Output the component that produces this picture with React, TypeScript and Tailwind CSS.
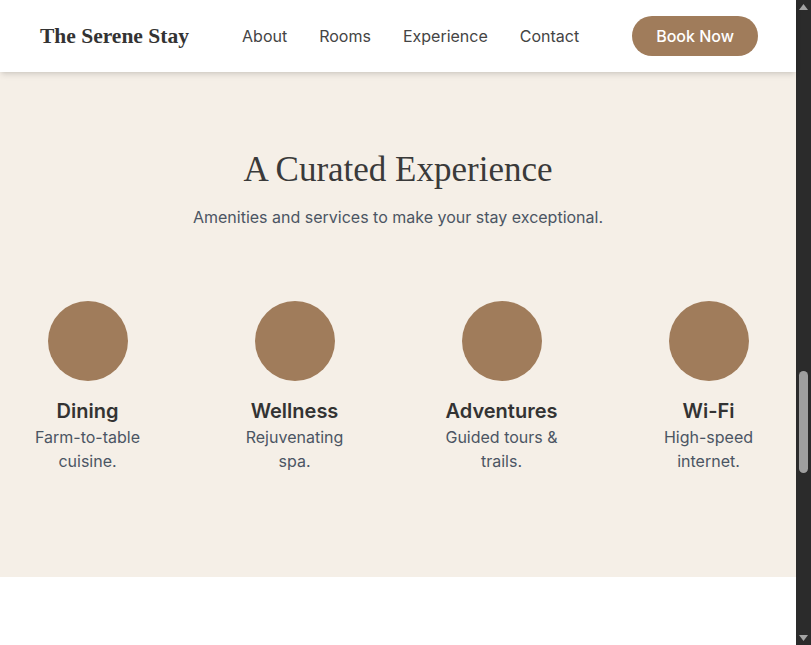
import React from 'react';

const amenities = [
  { title: 'Dining', text: 'Farm-to-table cuisine.' },
  { title: 'Wellness', text: 'Rejuvenating spa.' },
  { title: 'Adventures', text: 'Guided tours & trails.' },
  { title: 'Wi-Fi', text: 'High-speed internet.' },
];

const serif = "font-['Liberation_Serif',_'DejaVu_Serif',_serif]";

export default function App() {
  return (
    <div className="flex h-screen overflow-hidden bg-white font-['Inter',_'Noto_Sans',_sans-serif] text-[#333]">
      <div className="min-w-0 flex-1">
        <header className="relative z-10 h-[72px] bg-white shadow-md">
          <div className="flex h-full items-center justify-between pl-10 pr-[38px]">
            <a className={`${serif} text-[21.5px] font-bold text-[#333]`}>The Serene Stay</a>
            <div className="flex items-center">
              <nav className="flex items-center gap-8 text-base text-[#444]">
                <a>About</a>
                <a>Rooms</a>
                <a>Experience</a>
                <a>Contact</a>
              </nav>
              <button className="ml-[53px] rounded-full bg-[#a07c5b] px-6 py-2 text-base font-medium text-white">
                Book Now
              </button>
            </div>
          </div>
        </header>

        <section className="h-[505px] bg-[#f5efe7] px-6 pt-[78px]">
          <h2 className={`${serif} text-center text-[35px] leading-10 text-[#3a3a3a]`}>A Curated Experience</h2>
          <p className="mt-[15px] text-center text-base text-[#4b5563]">
            Amenities and services to make your stay exceptional.
          </p>
          <div className="mt-[72px] grid grid-cols-4 gap-20">
            {amenities.map((item) => (
              <div key={item.title} className="flex flex-col items-center text-center">
                <div className="h-20 w-20 rounded-full bg-[#a07c5b]" />
                <h3 className="mt-4 text-xl font-semibold text-[#333]">{item.title}</h3>
                <p className="text-base text-[#4b5563]">{item.text}</p>
              </div>
            ))}
          </div>
        </section>

        <section className="h-[600px] bg-white" />
      </div>

      {/* page scrollbar */}
      <div className="flex w-[15px] shrink-0 flex-col items-center bg-[#2b2b2b]">
        <svg width="9" height="6" viewBox="0 0 9 6" className="mt-1">
          <path d="M4.5 0 L9 6 L0 6 Z" fill="#a3a3a3" />
        </svg>
        <div className="mt-[361px] h-[102px] w-[9px] rounded-full bg-[#9f9f9f]" />
        <div className="flex-1" />
        <svg width="9" height="6" viewBox="0 0 9 6" className="mb-1">
          <path d="M0 0 L9 0 L4.5 6 Z" fill="#a3a3a3" />
        </svg>
      </div>
    </div>
  );
}
